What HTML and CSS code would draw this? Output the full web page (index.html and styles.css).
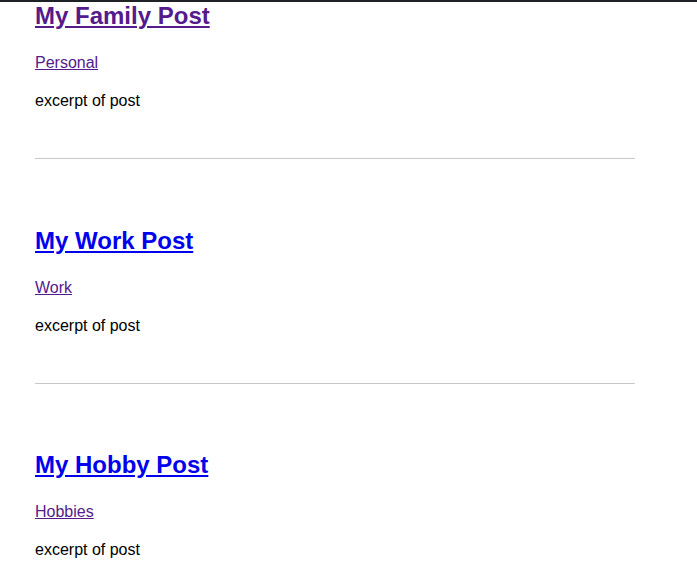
FILE: index.html
```html
<!DOCTYPE html>
<html>
<head>
<meta charset="utf-8">
<link rel="stylesheet" href="styles.css">
</head>
<body>
<div class="topbar"></div>
<main class="posts">
  <article class="post first">
    <h2 class="post-title"><a class="visited" href="#family">My Family Post</a></h2>
    <p class="post-category"><a class="visited" href="#personal">Personal</a></p>
    <p class="post-excerpt">excerpt of post</p>
  </article>
  <hr class="divider">
  <article class="post">
    <h2 class="post-title"><a class="fresh" href="#work">My Work Post</a></h2>
    <p class="post-category"><a class="visited" href="#workcat">Work</a></p>
    <p class="post-excerpt">excerpt of post</p>
  </article>
  <hr class="divider">
  <article class="post">
    <h2 class="post-title"><a class="fresh" href="#hobby">My Hobby Post</a></h2>
    <p class="post-category"><a class="visited" href="#hobbies">Hobbies</a></p>
    <p class="post-excerpt">excerpt of post</p>
  </article>
</main>
</body>
</html>
```
FILE: styles.css
```css
html, body {
  margin: 0;
  padding: 0;
  background: #ffffff;
}
body {
  font-family: "Liberation Sans", Arial, sans-serif;
  color: #000000;
  overflow: hidden;
}
.topbar {
  height: 2px;
  background: #1e2227;
}
.posts {
  width: 600px;
  margin-left: 35px;
}
.post {
  padding: 67.5px 0 46px;
}
.post.first {
  padding-top: 0;
}
.post-title {
  font-size: 24px;
  font-weight: bold;
  line-height: normal;
  margin: 0;
}
.post-category,
.post-excerpt {
  font-size: 16px;
  line-height: 22px;
  margin: 16px 0 0;
}
.post-category {
  margin-top: 22px;
}
a.visited {
  color: #551a8b;
}
a.fresh {
  color: #0000ee;
}
.divider {
  margin: 0;
  border: 0;
  border-top: 1px solid #c8c8c8;
  height: 0;
}
```
